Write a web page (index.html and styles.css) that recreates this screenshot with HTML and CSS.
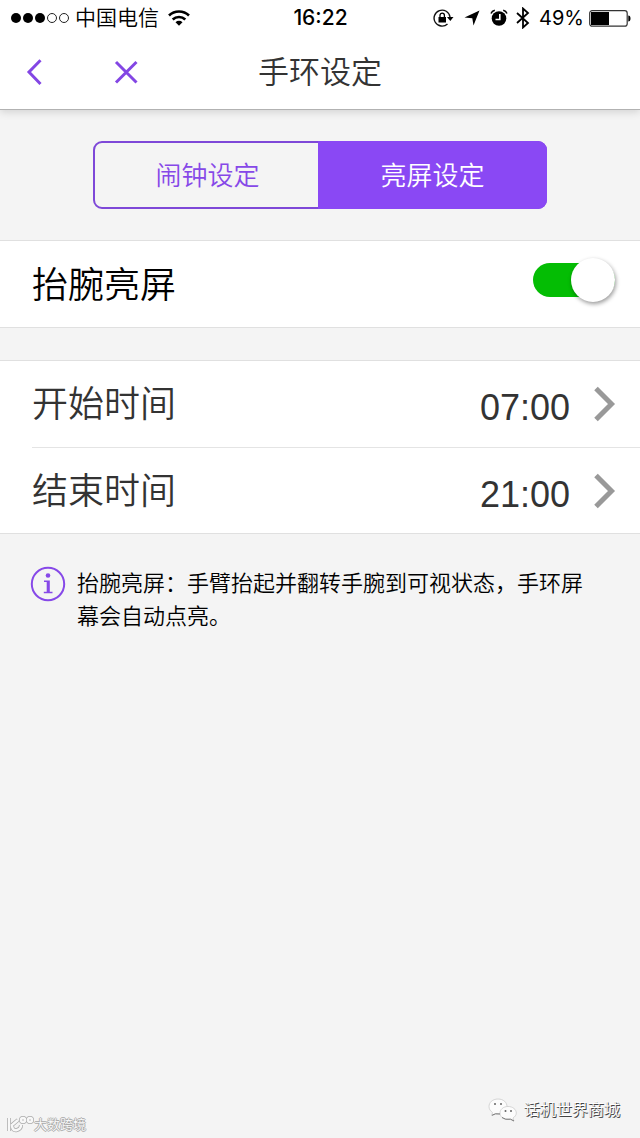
FILE: index.html
```html
<!DOCTYPE html>
<html lang="zh-CN">
<head>
<meta charset="utf-8">
<meta name="viewport" content="width=device-width, initial-scale=1">
<title>手环设定</title>
<link rel="stylesheet" href="styles.css">
</head>
<body>
<div class="screen">
  <header class="header">
    <div class="status">
      <div class="status-left">
        <svg class="signal" width="60" height="12" viewBox="0 0 60 12" aria-hidden="true">
          <g fill="#000"><circle cx="6" cy="6" r="5"/><circle cx="18" cy="6" r="5"/><circle cx="30" cy="6" r="5"/></g>
          <g fill="none" stroke="#222" stroke-width="1"><circle cx="42" cy="6" r="4.500"/><circle cx="54" cy="6" r="4.500"/></g>
        </svg>
        <span class="carrier">中国电信</span>
        <svg class="wifi" width="22" height="16" viewBox="0 0 22 16" aria-hidden="true">
          <g fill="none" stroke="#000" stroke-width="2.600"><path d="M1 5.500a14.500 14.500 0 0 1 20 0"/><path d="M4.700 9.500a9 9 0 0 1 12.600 0"/></g>
          <path d="M7.500 12.200a5 5 0 0 1 7 0L11 15.800z"/>
        </svg>
      </div>
      <time class="clock">16:22</time>
      <div class="status-right">
        <svg width="21" height="18" viewBox="0 0 21 18" aria-hidden="true">
          <path d="M14.500 15A8 8 0 1 1 17 8" fill="none" stroke="#111" stroke-width="1.400"/>
          <path d="M14 8h6.500l-3.200 4z"/><rect x="5.500" y="8" width="7.500" height="5.500"/>
          <path d="M7 8.500V6.300a2.200 2.200 0 0 1 4.400 0v2.200" fill="none" stroke="#000" stroke-width="1.300"/>
        </svg>
        <svg class="locate" width="16" height="16" viewBox="0 0 16 16" aria-hidden="true"><path d="M15.500.5L9.500 15.500 8.300 8.300.5 7.500z"/></svg>
        <svg class="alarm" width="18" height="18" viewBox="0 0 18 18" aria-hidden="true">
          <circle cx="9" cy="9.500" r="7.300"/><path d="M9.800 5v5.500H5.500" fill="none" stroke="#fff" stroke-width="1.600"/>
          <path d="M1 4.500Q2 2 4.800 1.300M17 4.500Q16 2 13.200 1.300" fill="none" stroke="#000" stroke-width="1.500"/>
        </svg>
        <svg class="bluetooth" width="14" height="22" viewBox="0 0 14 22" aria-hidden="true"><path d="M1 6l11 10-5 4.500v-19L12 6 1 16" fill="none" stroke="#000" stroke-width="1.800"/></svg>
        <span class="percent">49%</span>
        <svg width="42" height="17" viewBox="0 0 42 17" aria-hidden="true">
          <rect x=".7" y=".7" width="37.500" height="15.500" rx="2.500" fill="#fff" stroke="#333" stroke-width="1.200"/>
          <path d="M2 2h18v13H2zM39.300 5.500q2.200 0 2.200 3t-2.200 3z"/>
        </svg>
      </div>
    </div>
    <nav class="nav">
      <div class="nav-actions">
        <button class="nav-button" type="button" aria-label="返回"><svg width="18" height="28" viewBox="0 0 18 28"><path d="M16.500 2.200L5 14l11.500 12"/></svg></button>
        <button class="nav-button" type="button" aria-label="关闭"><svg width="24" height="24" viewBox="0 0 24 24"><path d="M2 2l20.500 20.500M22.500 2L2 22.500"/></svg></button>
      </div>
      <h1 class="title">手环设定</h1>
    </nav>
  </header>

  <main class="content">
    <div class="tabs">
      <button class="tab" type="button">闹钟设定</button>
      <button class="tab tab-active" type="button">亮屏设定</button>
    </div>

    <section class="group">
      <label class="row row-toggle"><span class="label">抬腕亮屏</span><input class="switch" type="checkbox" role="switch" checked></label>
    </section>

    <section class="group times">
      <button class="row row-time" type="button"><span class="label">开始时间</span><span class="value">07:00</span>
        <svg class="chevron" width="22" height="36" viewBox="0 0 22 36" aria-hidden="true"><path d="M2 2.500L17.500 18 2 33.500"/></svg></button>
      <button class="row row-time" type="button"><span class="label">结束时间</span><span class="value">21:00</span>
        <svg class="chevron" width="22" height="36" viewBox="0 0 22 36" aria-hidden="true"><path d="M2 2.500L17.500 18 2 33.500"/></svg></button>
    </section>

    <div class="note">
      <svg class="info" width="36" height="36" viewBox="0 0 36 36" aria-hidden="true">
        <circle cx="18" cy="18" r="16.200" fill="none" stroke="#8648e8" stroke-width="2"/>
        <circle cx="18" cy="9.500" r="2.300" fill="#8648e8"/>
        <path d="M14 14.500h5.800v11.300h2.700v1.500h-8.700v-1.500h2.900V16H14z" fill="#8648e8"/>
      </svg>
      <p class="note-text">抬腕亮屏：手臂抬起并翻转手腕到可视状态，手环屏幕会自动点亮。</p>
    </div>
  </main>

  <footer class="marks">
    <div class="mark-left">
      <svg width="28" height="18" viewBox="0 0 28 18" fill="none" aria-hidden="true">
        <g stroke="#aaa" stroke-width="4"><path d="M3 2v13M12 4L6 9q0 6 5 5 4-1 4-5"/><circle cx="17" cy="4" r="2"/><circle cx="24" cy="4" r="2"/></g>
        <g stroke="#f8f8f8" stroke-width="2.500"><path d="M3 2v13M12 4L6 9q0 6 5 5 4-1 4-5"/><circle cx="17" cy="4" r="2"/><circle cx="24" cy="4" r="2"/></g>
      </svg>
      <span>大数跨境</span>
    </div>
    <div class="mark-right">
      <svg width="30" height="24" viewBox="0 0 30 24" aria-hidden="true">
        <g fill="#fcfcfc" stroke="#ccc" stroke-width=".8"><path d="M10 1C4.500 1 1 4.500 1 8.500c0 2.500 1.300 4.500 3.500 6L3.500 17.500l4-1.700c7 1 11.500-2.500 11.500-7.300C19 4.500 15.500 1 10 1z"/><path d="M20 8.500c-4.700 0-8 3-8 6.500s3.300 6.500 8 6.500l2.500-.3 3.500 1.800-1-3c2-1.200 3.300-3 3.300-5 0-3.500-3.500-6.500-8.300-6.500z"/></g>
        <g fill="#666"><circle cx="7" cy="6" r="1"/><circle cx="13" cy="6" r="1"/><circle cx="17.500" cy="13" r="1"/><circle cx="23" cy="13" r="1"/></g>
        <path d="M4 17.300l3.500-1.500 4.500.2M14 19.500q3 2.500 8.500 1.700l3.500 1.800" fill="none" stroke="#777"/>
      </svg>
      <span>话机世界商城</span>
    </div>
  </footer>
</div>
</body>
</html>
```

FILE: styles.css
```css
* { box-sizing: border-box; }
body {
  margin: 0;
  background: #f4f4f4;
  color: #000;
  font-family: "Liberation Sans", "Noto Sans CJK SC DemiLight", "Noto Sans CJK SC", sans-serif;
  font-weight: 350;
}
button {
  margin: 0;
  padding: 0;
  border: 0;
  background: none;
  color: inherit;
  font: inherit;
  cursor: pointer;
}
svg { display: block; flex: none; }
.screen {
  display: flex;
  flex-direction: column;
  min-height: 100vh;
}
.header {
  background: #fff;
  border-bottom: 1px solid #b2b2b2;
  box-shadow: 0 2px 8px rgba(0, 0, 0, .14);
}
.status {
  display: grid;
  grid-template-columns: 1fr auto 1fr;
  align-items: center;
  height: 36px;
  padding: 0 9px 0 10px;
}
.status-left, .status-right { display: flex; align-items: center; }
.status-right { justify-content: flex-end; }
.carrier {
  margin: 0 9px 0 5px;
  font-size: 21px;
  line-height: 24px;
}
.clock {
  font: 500 21px/24px Inter, sans-serif;
}
.locate { margin-left: 10px; }
.alarm { margin-left: 10px; }
.bluetooth { margin-left: 8px; }
.percent {
  margin: 0 5px 0 9px;
  font: 400 20px/24px Inter, sans-serif;
}
.nav {
  display: grid;
  grid-template-columns: 1fr auto 1fr;
  align-items: center;
  height: 73px;
  padding: 0 24px 2px;
}
.nav-actions { display: flex; align-items: center; gap: 72px; }
.nav-button svg { fill: none; stroke: #8346e4; stroke-width: 3; }
.title {
  margin: 0;
  padding-top: 2px;
  color: #333;
  font-size: 31px;
  font-weight: 350;
  line-height: 40px;
}
.content { flex: 1; }
.tabs {
  display: flex;
  width: 71%;
  height: 68px;
  margin: 31px auto;
  border: 2px solid #7e48d8;
  border-radius: 9px;
}
.tab {
  flex: 1;
  padding-bottom: 3px;
  color: #8648e8;
  font-size: 26px;
}
.tab-active {
  background: #8a48f4;
  box-shadow: 0 0 0 2px #8a48f4;
  border-radius: 0 7px 7px 0;
  color: #fff;
}
.group {
  background: #fff;
  border: solid #e0e0e0;
  border-width: 1px 0;
}
.row {
  display: flex;
  align-items: center;
  width: 100%;
  height: 86px;
  padding-right: 24px;
}
.label {
  flex: 1;
  padding-top: 2px;
  font-size: 36px;
  line-height: 48px;
  text-align: left;
}
.row-toggle {
  padding-left: 32px;
  padding-top: 2px;
}
.switch {
  appearance: none;
  display: flex;
  align-items: center;
  justify-content: flex-end;
  width: 82px;
  height: 34px;
  margin: 0 1px 10px 0;
  border-radius: 17px;
  background: #04bd04;
}
.switch::before {
  content: "";
  width: 44px;
  height: 44px;
  flex: none;
  border-radius: 50%;
  background: #fff;
  box-shadow: 1px 2px 4px rgba(0, 0, 0, .4);
}
.times { margin-top: 32px; padding-left: 32px; }
.row-time { color: #333; }
.row-time + .row-time { border-top: 1px solid #e4e4e4; }
.value {
  margin-right: 24px;
  padding-top: 8px;
  font-size: 36px;
  line-height: 40px;
}
.chevron { fill: none; stroke: #999; stroke-width: 5; }
.note {
  display: flex;
  align-items: flex-start;
  gap: 11px;
  padding: 32px 48px 32px 30px;
}
.note-text {
  margin: 0;
  padding-top: 1px;
  font-size: 22px;
  line-height: 33px;
}
.marks {
  display: flex;
  align-items: flex-end;
  justify-content: space-between;
  padding: 0 20px 4px 6px;
}
.mark-left, .mark-right { display: flex; align-items: center; }
.mark-left span {
  color: #fafafa;
  font-size: 13px;
  line-height: 18px;
  text-shadow: 1px 0 #aaa, -1px 0 #aaa, 0 1px #aaa, 0 -1px #aaa;
}
.mark-right {
  gap: 6px;
  padding-bottom: 12px;
}
.mark-right span {
  color: #fff;
  font-size: 16px;
  line-height: 24px;
  text-shadow: 1px 1px #444, 0 1px #777;
}
```
